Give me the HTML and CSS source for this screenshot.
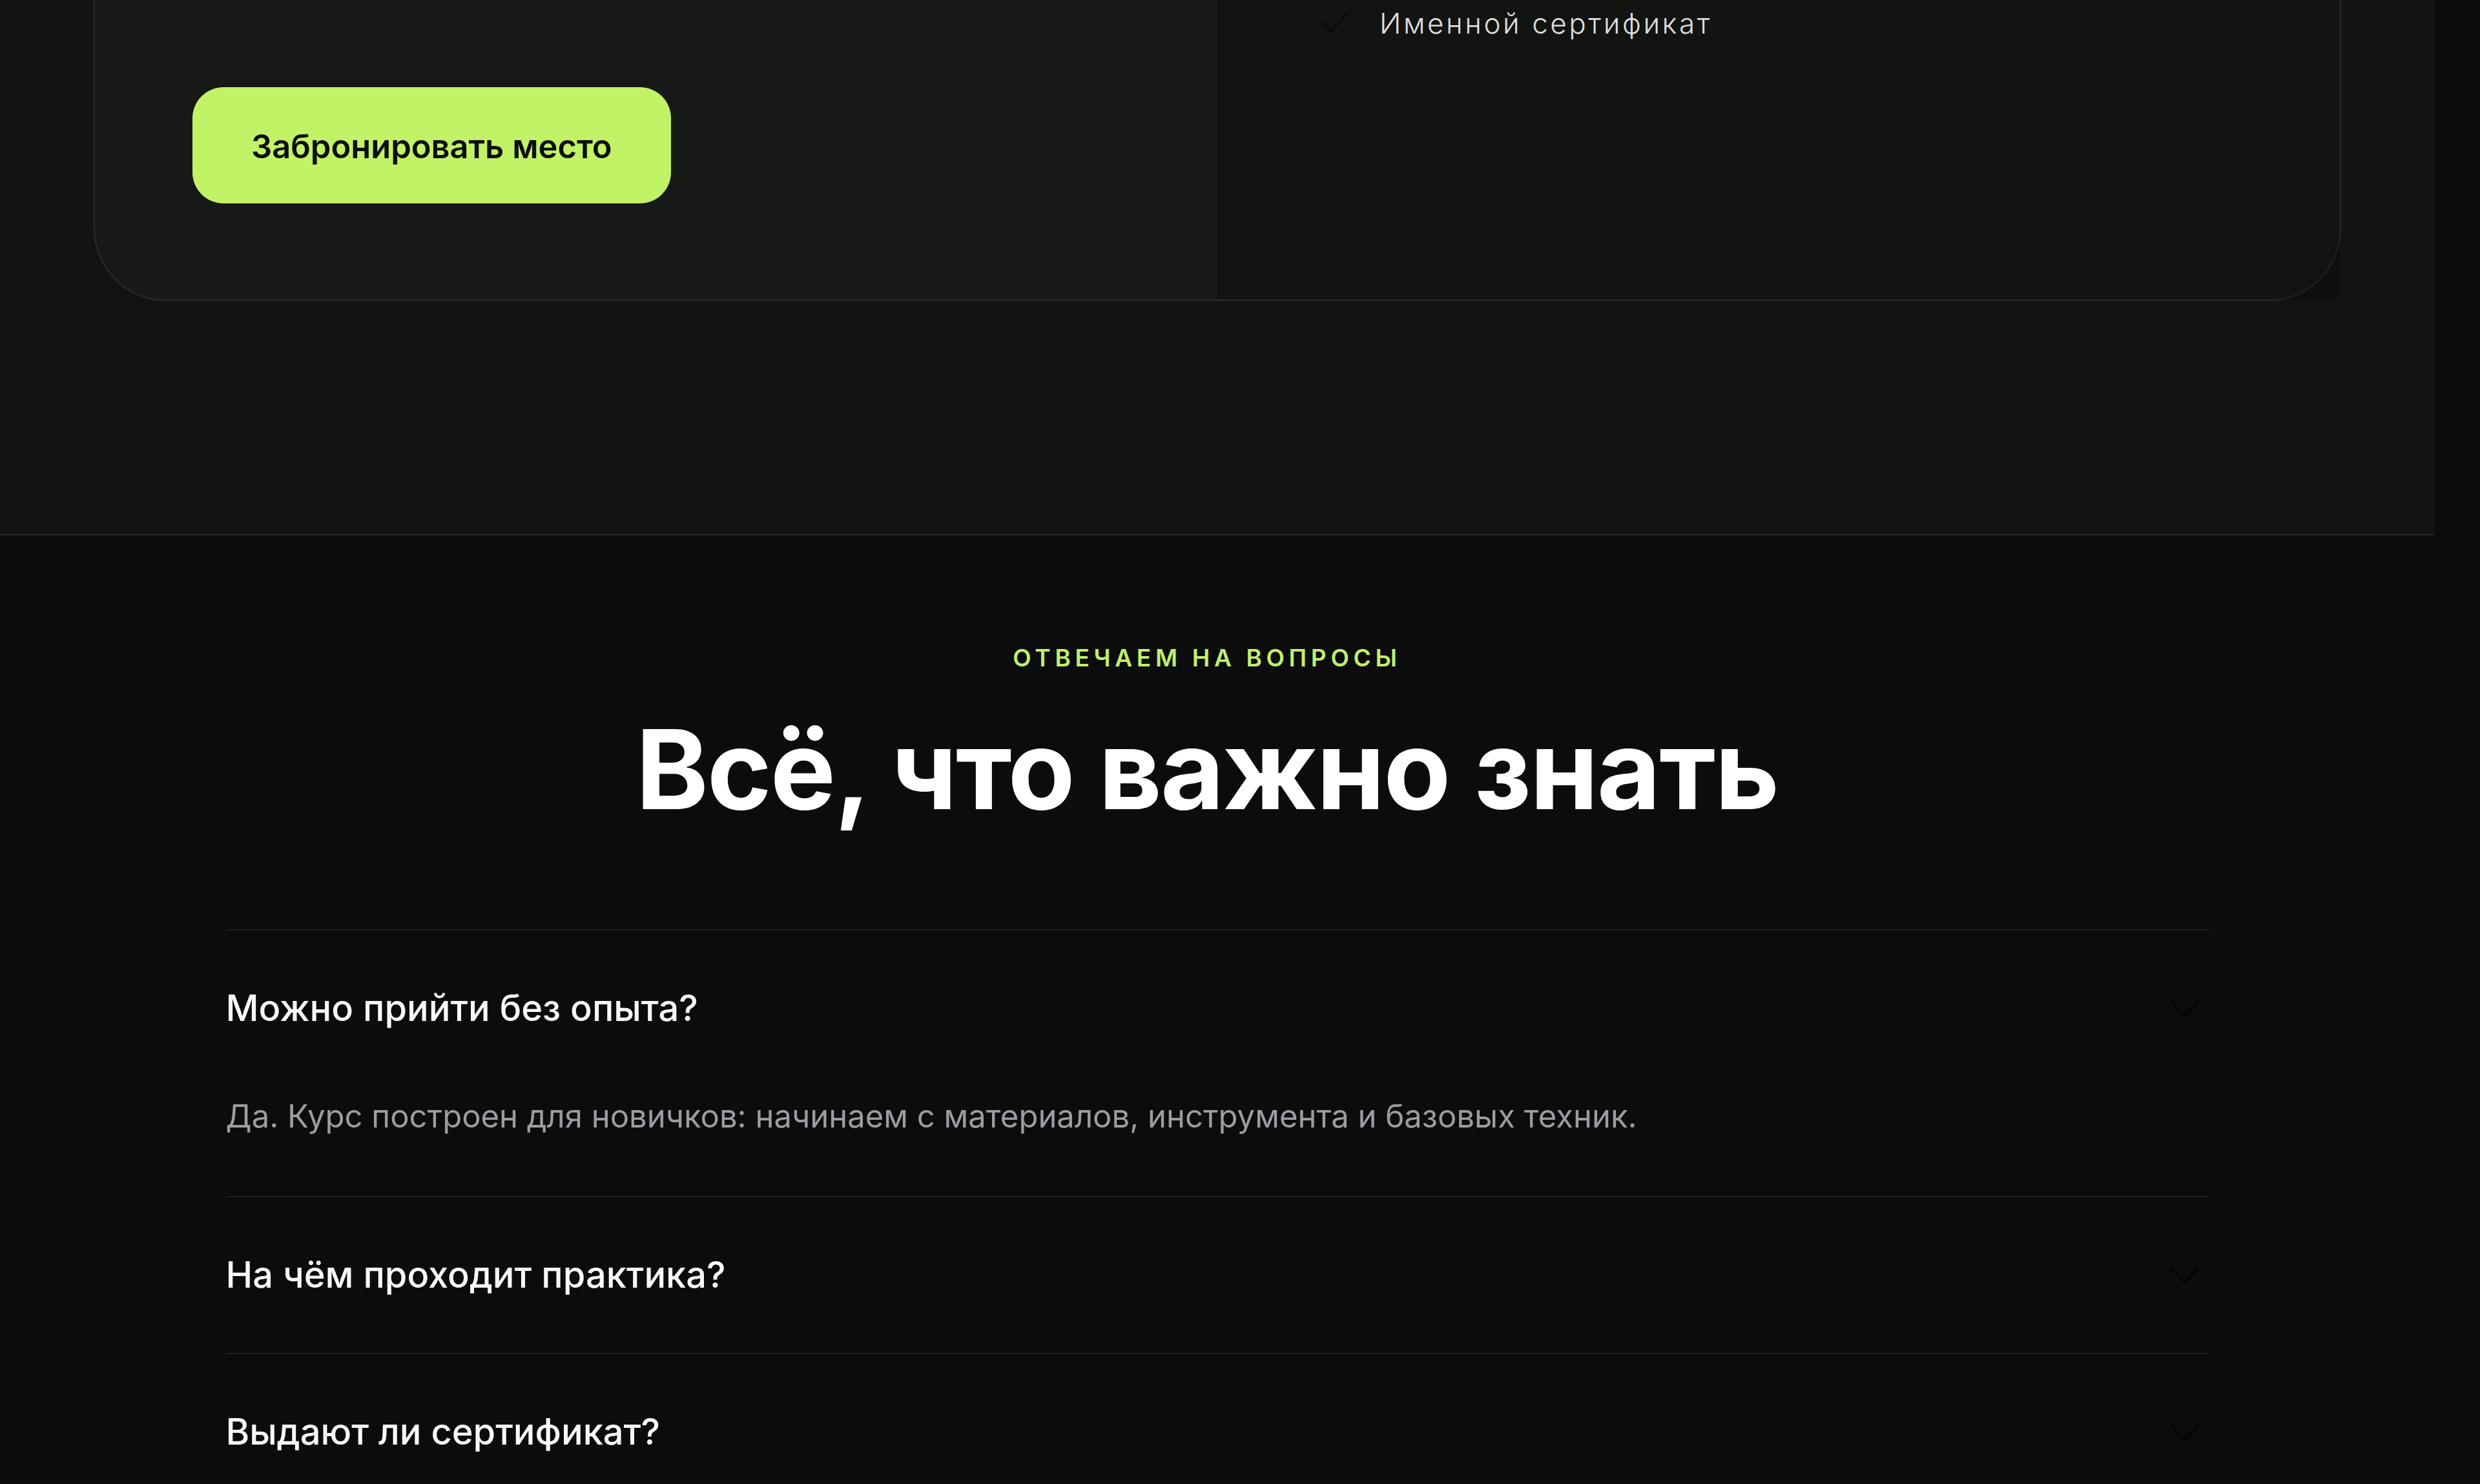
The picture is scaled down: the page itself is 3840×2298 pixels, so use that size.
FILE: index.html
```html
<!DOCTYPE html>
<html lang="ru">
<head>
  <meta charset="utf-8" />
  <title>Курс — запись и вопросы</title>
  <meta name="viewport" content="width=device-width, initial-scale=1">
  <link rel="stylesheet" href="styles.css">
</head>
<body>

<div class="page">
  <section class="offer">
    <div class="offer-card">
      <div class="offer-main">
        <a class="btn-book" href="#book">Забронировать место</a>
      </div>
      <div class="offer-side">
        <ul class="perks">
          <li>
            <svg class="perk-check" width="60" height="46" viewBox="0 0 60 46">
              <polyline points="12,21 25,36 52,7" fill="none" stroke="#090a09" stroke-width="4" stroke-linecap="round" stroke-linejoin="round"/>
            </svg>
            <span>Именной сертификат</span>
          </li>
        </ul>
      </div>
    </div>
  </section>

  <section class="faq">
    <div class="faq-head">
      <div class="faq-eyebrow">Отвечаем на вопросы</div>
      <h2 class="faq-title">Всё, что важно знать</h2>
    </div>

    <div class="faq-list">
      <div class="faq-item open">
        <div class="faq-q">
          <span>Можно прийти без опыта?</span>
          <svg class="chev" width="64" height="64" viewBox="0 0 64 64"><polyline points="6,22 25.5,43 45,22" fill="none" stroke="#050505" stroke-width="5" stroke-linecap="round" stroke-linejoin="round"/></svg>
        </div>
        <div class="faq-a">Да. Курс построен для новичков: начинаем с материалов, инструмента и базовых техник.</div>
      </div>
      <div class="faq-item">
        <div class="faq-q">
          <span>На чём проходит практика?</span>
          <svg class="chev" width="64" height="64" viewBox="0 0 64 64"><polyline points="6,22 25.5,43 45,22" fill="none" stroke="#050505" stroke-width="5" stroke-linecap="round" stroke-linejoin="round"/></svg>
        </div>
      </div>
      <div class="faq-item">
        <div class="faq-q">
          <span>Выдают ли сертификат?</span>
          <svg class="chev" width="64" height="64" viewBox="0 0 64 64"><polyline points="6,22 25.5,43 45,22" fill="none" stroke="#050505" stroke-width="5" stroke-linecap="round" stroke-linejoin="round"/></svg>
        </div>
      </div>
    </div>
  </section>
</div>

</body>
</html>
```

FILE: styles.css
```css
    body, html {
      margin:0;
      background:#0c0c0c;
      font-family:Inter, "Noto Sans", sans-serif;
      color:#fff;
    }
    .page {
      width:3770px;
      overflow:hidden;
    }

    /* offer block, scrolled partly out of view */
    .offer {
      margin-top:-142px;
      padding:0 145px 361px;
      background:#121412;
      border-bottom:2px solid #242624;
    }
    .offer-card {
      display:grid;
      grid-template-columns:1fr 1fr;
      background:#171917;
      border:2px solid #2a2c2a;
      border-radius:112px;
    }
    .offer-main {
      display:flex;
      flex-direction:column;
      align-items:flex-start;
      padding:150px 150px 149px 151px;
    }
    .btn-book {
      margin-top:125px;
      display:inline-flex;
      align-items:center;
      height:180px;
      padding:2px 91px 0;
      box-sizing:border-box;
      border-radius:48px;
      background:#c2f266;
      color:#0b0d0b;
      font-size:50.6px;
      font-weight:600;
      text-decoration:none;
    }
    .offer-side {
      background:rgba(0,0,0,0.2);
      padding:148px 150px 150px 150px;
    }
    .perks {
      list-style:none;
      margin:0;
      padding:0;
    }
    .perks li {
      display:flex;
      align-items:flex-start;
      gap:41px;
      font-size:44px;
      font-weight:300;
      line-height:56px;
      letter-spacing:0.08em;
      color:#dedede;
    }
    .perk-check {
      flex:none;
      margin-top:5px;
    }

    /* questions */
    .faq {
      padding:168px 0 0;
    }
    .faq-head {
      padding-right:32px;
      text-align:center;
    }
    .faq-eyebrow {
      font-size:37px;
      line-height:44px;
      font-weight:600;
      letter-spacing:0.18em;
      text-transform:uppercase;
      color:#c2ef6b;
    }
    .faq-title {
      margin:60px 0 0;
      font-size:170px;
      line-height:180px;
      font-weight:700;
      letter-spacing:-0.012em;
    }
    .faq-list {
      width:3071px;
      margin:158px auto 0;
    }
    .faq-item {
      border-top:2px solid #212121;
    }
    .faq-q {
      display:flex;
      justify-content:space-between;
      align-items:center;
      padding:84px 0 84px;
      font-size:56px;
      line-height:73px;
      font-weight:500;
      color:#fafafa;
    }
    .chev {
      flex:none;
    }
    .faq-a {
      display:none;
      margin-top:9px;
      padding-bottom:86px;
      font-size:49px;
      line-height:75px;
      font-weight:400;
      color:#9c9ca2;
    }
    .faq-item.open .faq-a {
      display:block;
    }
```
